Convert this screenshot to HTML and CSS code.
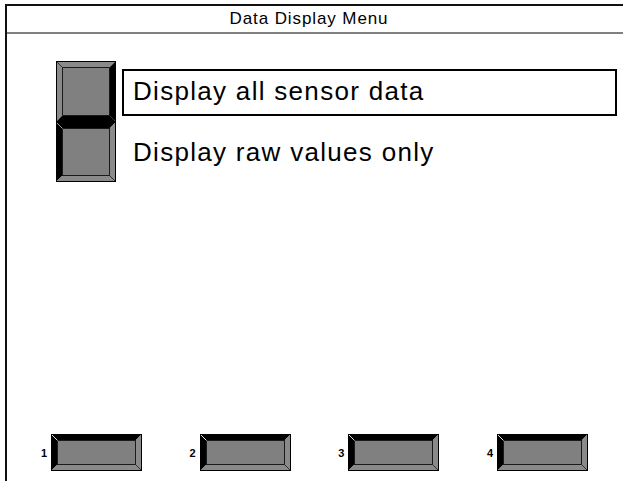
FILE: index.html
```html
<!DOCTYPE html>
<html>
<head>
<meta charset="utf-8">
<title>Data Display Menu</title>
<link rel="stylesheet" href="styles.css">
</head>
<body>
<div class="screen">
  <div class="header">Data Display Menu</div>
  <div class="menu">
    <svg class="key-tall" width="60" height="61" viewBox="0 0 60 61">
      <polygon points="0,0 60,0 54,6 6,6" fill="#8a8a8a"/>
      <polygon points="0,0 6,6 6,55 0,61" fill="#8a8a8a"/>
      <polygon points="60,0 60,61 54,55 54,6" fill="#000"/>
      <polygon points="0,61 6,55 54,55 60,61" fill="#000"/>
      <rect x="6.5" y="6.5" width="47" height="48" fill="#808080" stroke="#1a1a1a"/>
      <line x1="0.5" y1="0.5" x2="6.5" y2="6.5" stroke="#333"/>
      <line x1="59.5" y1="0.5" x2="53.5" y2="6.5" stroke="#555"/>
      <line x1="0.5" y1="60.5" x2="6.5" y2="54.5" stroke="#555"/>
      <rect x="0.5" y="0.5" width="59" height="60" fill="none" stroke="#000"/>
    </svg>
    <div class="item item-selected">Display all sensor data</div>
    <svg class="key-tall" width="60" height="60" viewBox="0 0 60 60">
      <polygon points="0,0 60,0 54,6 6,6" fill="#000"/>
      <polygon points="0,0 6,6 6,54 0,60" fill="#000"/>
      <polygon points="60,0 60,60 54,54 54,6" fill="#8a8a8a"/>
      <polygon points="0,60 6,54 54,54 60,60" fill="#8a8a8a"/>
      <rect x="6.5" y="6.5" width="47" height="47" fill="#808080" stroke="#1a1a1a"/>
      <line x1="0.5" y1="0.5" x2="6.5" y2="6.5" stroke="#9a9a9a"/>
      <line x1="53.5" y1="53.5" x2="59.5" y2="59.5" stroke="#333"/>
      <rect x="0.5" y="0.5" width="59" height="59" fill="none" stroke="#000"/>
    </svg>
    <div class="item">Display raw values only</div>
  </div>
  <div class="footer">
    <div class="fkey"><span class="fnum">1</span>
      <svg width="91" height="37" viewBox="0 0 91 37">
        <polygon points="0,0 91,0 85,6 6,6" fill="#000"/>
        <polygon points="0,0 6,6 6,31 0,37" fill="#000"/>
        <polygon points="91,0 91,37 85,31 85,6" fill="#8a8a8a"/>
        <polygon points="0,37 6,31 85,31 91,37" fill="#8a8a8a"/>
        <rect x="6.5" y="6.5" width="78" height="24" fill="#808080" stroke="#1a1a1a"/>
        <line x1="0.5" y1="0.5" x2="6.5" y2="6.5" stroke="#e0e0e0"/>
        <line x1="84.5" y1="30.5" x2="90.5" y2="36.5" stroke="#333"/>
        <rect x="0.5" y="0.5" width="90" height="36" fill="none" stroke="#000"/>
      </svg>
    </div>
    <div class="fkey"><span class="fnum">2</span>
      <svg width="91" height="37" viewBox="0 0 91 37">
        <polygon points="0,0 91,0 85,6 6,6" fill="#000"/>
        <polygon points="0,0 6,6 6,31 0,37" fill="#000"/>
        <polygon points="91,0 91,37 85,31 85,6" fill="#8a8a8a"/>
        <polygon points="0,37 6,31 85,31 91,37" fill="#8a8a8a"/>
        <rect x="6.5" y="6.5" width="78" height="24" fill="#808080" stroke="#1a1a1a"/>
        <line x1="0.5" y1="0.5" x2="6.5" y2="6.5" stroke="#e0e0e0"/>
        <line x1="84.5" y1="30.5" x2="90.5" y2="36.5" stroke="#333"/>
        <rect x="0.5" y="0.5" width="90" height="36" fill="none" stroke="#000"/>
      </svg>
    </div>
    <div class="fkey"><span class="fnum">3</span>
      <svg width="91" height="37" viewBox="0 0 91 37">
        <polygon points="0,0 91,0 85,6 6,6" fill="#000"/>
        <polygon points="0,0 6,6 6,31 0,37" fill="#000"/>
        <polygon points="91,0 91,37 85,31 85,6" fill="#8a8a8a"/>
        <polygon points="0,37 6,31 85,31 91,37" fill="#8a8a8a"/>
        <rect x="6.5" y="6.5" width="78" height="24" fill="#808080" stroke="#1a1a1a"/>
        <line x1="0.5" y1="0.5" x2="6.5" y2="6.5" stroke="#e0e0e0"/>
        <line x1="84.5" y1="30.5" x2="90.5" y2="36.5" stroke="#333"/>
        <rect x="0.5" y="0.5" width="90" height="36" fill="none" stroke="#000"/>
      </svg>
    </div>
    <div class="fkey"><span class="fnum">4</span>
      <svg width="91" height="37" viewBox="0 0 91 37">
        <polygon points="0,0 91,0 85,6 6,6" fill="#000"/>
        <polygon points="0,0 6,6 6,31 0,37" fill="#000"/>
        <polygon points="91,0 91,37 85,31 85,6" fill="#8a8a8a"/>
        <polygon points="0,37 6,31 85,31 91,37" fill="#8a8a8a"/>
        <rect x="6.5" y="6.5" width="78" height="24" fill="#808080" stroke="#1a1a1a"/>
        <line x1="0.5" y1="0.5" x2="6.5" y2="6.5" stroke="#e0e0e0"/>
        <line x1="84.5" y1="30.5" x2="90.5" y2="36.5" stroke="#333"/>
        <rect x="0.5" y="0.5" width="90" height="36" fill="none" stroke="#000"/>
      </svg>
    </div>
  </div>
</div>
</body>
</html>
```
FILE: styles.css
```css
html, body {
  margin: 0;
  padding: 0;
  background: #fff;
  overflow: hidden;
}
body {
  width: 623px;
  height: 481px;
  font-family: "Liberation Sans", Arial, sans-serif;
  color: #000;
}
.screen {
  margin: 4px 0 0 5px;
  border-top: 2px solid #111;
  border-left: 2px solid #111;
  height: 477px;
  display: flex;
  flex-direction: column;
  box-sizing: border-box;
}
.header {
  height: 26px;
  line-height: 26px;
  border-bottom: 2px solid #808080;
  text-align: center;
  font-size: 17px;
  letter-spacing: 0.9px;
  padding-right: 12px;
}
.menu {
  padding: 27px 0 0 49px;
  display: grid;
  grid-template-columns: 60px 495px;
  grid-template-rows: 61px 60px;
  column-gap: 6px;
}
.key-tall {
  display: block;
}
.item {
  align-self: start;
  margin-top: 8px;
  height: 47px;
  box-sizing: border-box;
  border: 2px solid transparent;
  padding: 0 0 2px 9px;
  font-size: 26px;
  letter-spacing: 1.3px;
  line-height: 41px;
  white-space: nowrap;
}
.item-selected {
  border-color: #000;
}
.footer {
  margin-top: auto;
  padding: 0 0 10px 30px;
  display: grid;
  grid-template-columns: repeat(4, 105px);
  column-gap: 43.7px;
}
.fkey {
  display: flex;
  align-items: center;
  gap: 4px;
}
.fkey svg {
  display: block;
}
.fnum {
  width: 10px;
  text-align: right;
  font-size: 11px;
  font-weight: bold;
}
```
